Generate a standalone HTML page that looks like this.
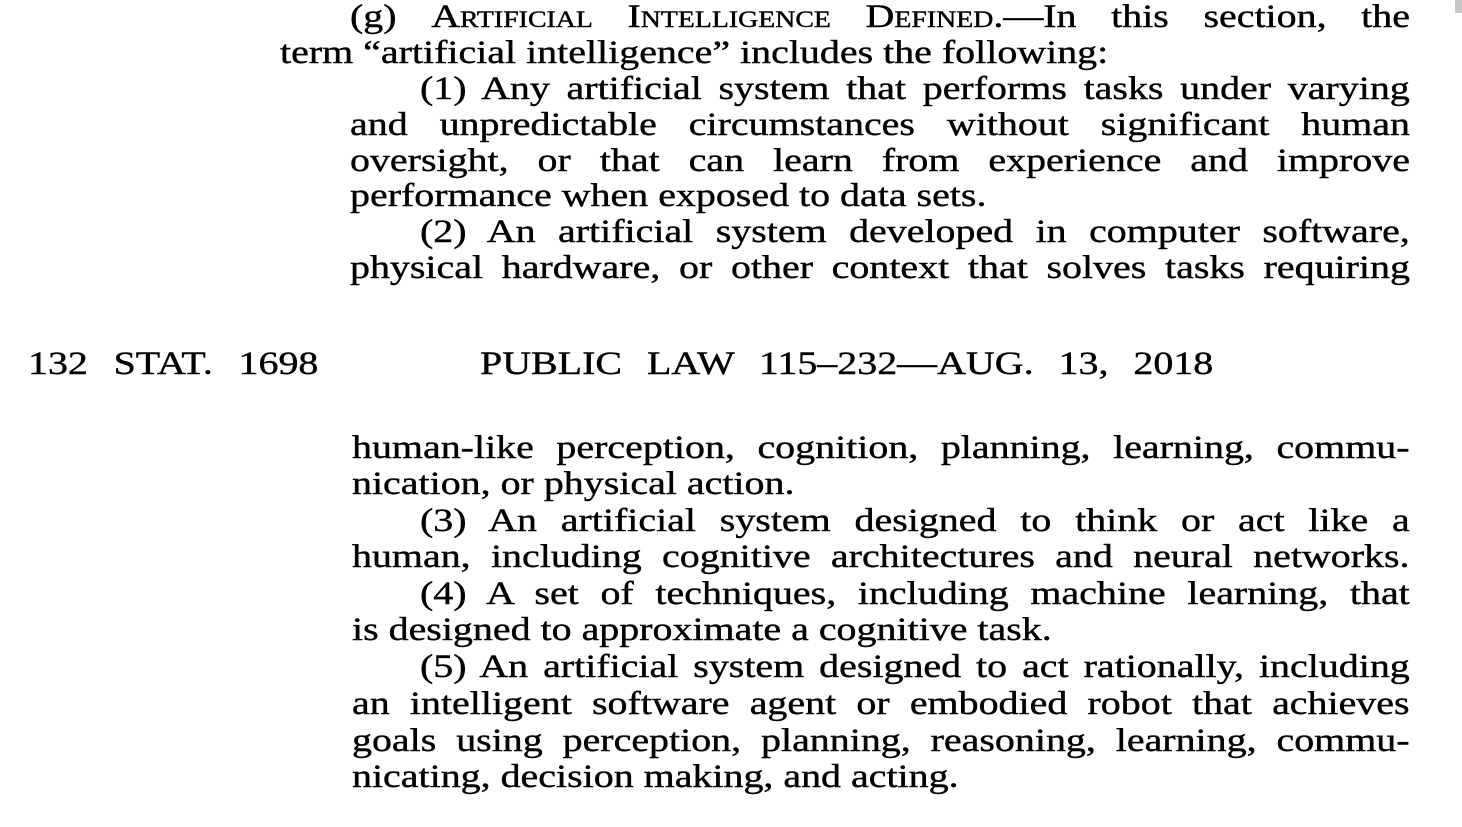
<!DOCTYPE html>
<html><head><meta charset="utf-8"><style>
html,body{margin:0;padding:0;background:#fff;}
body{width:1462px;height:827px;position:relative;overflow:hidden;font-family:"Liberation Serif",serif;color:#000;}
.l{position:absolute;white-space:nowrap;font-size:33px;line-height:36px;height:36px;text-align:justify;text-align-last:justify;transform:scaleX(1.21);transform-origin:0 0;-webkit-text-stroke:0.4px #000;}
.n{text-align:left;text-align-last:left;}
.sc{font-variant:small-caps;}
</style></head><body>
<div style="position:absolute;left:1455px;top:0;width:7px;height:13px;background:#c8c8c8"></div>
<div class="l" style="left:350px;top:-1px;width:876px">(g) <span class="sc">Artificial Intelligence Defined</span>.—In this section, the</div>
<div class="l n" style="left:280px;top:35px;">term “artificial intelligence” includes the following:</div>
<div class="l" style="left:420px;top:71px;width:818px">(1) Any artificial system that performs tasks under varying</div>
<div class="l" style="left:350px;top:107px;width:876px">and unpredictable circumstances without significant human</div>
<div class="l" style="left:350px;top:143px;width:876px">oversight, or that can learn from experience and improve</div>
<div class="l n" style="left:350px;top:178px;">performance when exposed to data sets.</div>
<div class="l" style="left:420px;top:214px;width:818px">(2) An artificial system developed in computer software,</div>
<div class="l" style="left:350px;top:250px;width:876px">physical hardware, or other context that solves tasks requiring</div>
<div class="l" style="left:28px;top:346px;width:240px">132 STAT. 1698</div>
<div class="l" style="left:480px;top:346px;width:606px">PUBLIC LAW 115–232—AUG. 13, 2018</div>
<div class="l" style="left:352px;top:430px;width:874px">human-like perception, cognition, planning, learning, commu-</div>
<div class="l n" style="left:352px;top:466px;">nication, or physical action.</div>
<div class="l" style="left:420px;top:503px;width:818px">(3) An artificial system designed to think or act like a</div>
<div class="l" style="left:352px;top:539px;width:874px">human, including cognitive architectures and neural networks.</div>
<div class="l" style="left:420px;top:576px;width:818px">(4) A set of techniques, including machine learning, that</div>
<div class="l n" style="left:352px;top:612px;">is designed to approximate a cognitive task.</div>
<div class="l" style="left:420px;top:649px;width:818px">(5) An artificial system designed to act rationally, including</div>
<div class="l" style="left:352px;top:686px;width:874px">an intelligent software agent or embodied robot that achieves</div>
<div class="l" style="left:352px;top:723px;width:874px">goals using perception, planning, reasoning, learning, commu-</div>
<div class="l n" style="left:352px;top:759px;">nicating, decision making, and acting.</div>
</body></html>
